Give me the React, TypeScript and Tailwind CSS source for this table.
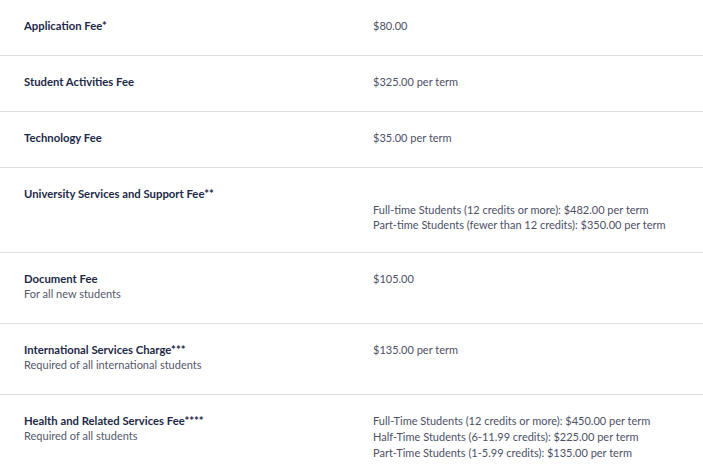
const fees = [
  { label: "Application Fee*", values: ["$80.00"] },
  { label: "Student Activities Fee", values: ["$325.00 per term"] },
  { label: "Technology Fee", values: ["$35.00 per term"] },
  {
    label: "University Services and Support Fee**",
    values: [
      "Full-time Students (12 credits or more): $482.00 per term",
      "Part-time Students (fewer than 12 credits): $350.00 per term",
    ],
    offset: true,
  },
  { label: "Document Fee", note: "For all new students", values: ["$105.00"] },
  {
    label: "International Services Charge***",
    note: "Required of all international students",
    values: ["$135.00 per term"],
  },
  {
    label: "Health and Related Services Fee****",
    note: "Required of all students",
    values: [
      "Full-Time Students (12 credits or more): $450.00 per term",
      "Half-Time Students (6-11.99 credits): $225.00 per term",
      "Part-Time Students (1-5.99 credits): $135.00 per term",
    ],
  },
];

const App = () => {
  return (
    <div className="w-[703px] h-[476px] overflow-hidden bg-white font-['Lato',sans-serif] text-[11px] leading-[15px]">
      {fees.map((fee, index) => (
        <div
          key={index}
          className={`grid grid-cols-[373px_1fr] pt-[18px] ${fee.offset ? "pb-5" : "pb-[22px]"} ${index < fees.length - 1 ? "border-b border-[#dedede]" : ""}`}
        >
          {/* Fee name */}
          <div className="pl-6">
            <p className="font-bold text-[11.3px] text-[#1e2947]">{fee.label}</p>
            {fee.note && <p className="text-[#55586a]">{fee.note}</p>}
          </div>

          {/* Amounts */}
          <div className={fee.offset ? "mt-4" : ""}>
            {fee.values.map((value, i) => (
              <p key={i} className={`text-[#4d5066] ${fee.values.length > 2 ? "leading-[16px]" : ""}`}>
                {value}
              </p>
            ))}
          </div>
        </div>
      ))}
    </div>
  );
};

export default App;
